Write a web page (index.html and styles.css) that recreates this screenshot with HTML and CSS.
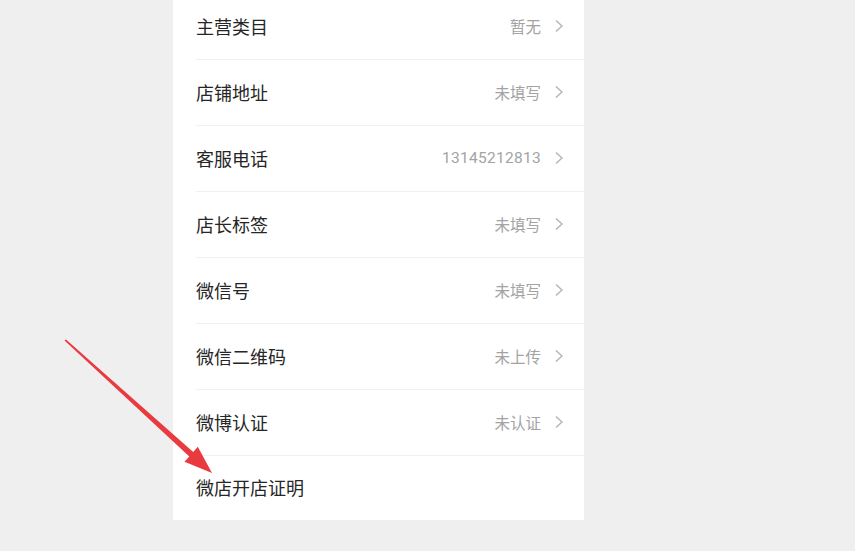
FILE: index.html
```html
<!DOCTYPE html>
<html lang="zh">
<head>
<meta charset="utf-8">
<link rel="stylesheet" href="styles.css">
</head>
<body>
<div class="panel">
  <div class="row"><div class="inner"><span class="label">主营类目</span><span class="value">暂无</span><svg class="chev" viewBox="0 0 10 14"><path d="M2 1.5 L8 7 L2 12.5"/></svg></div></div>
  <div class="row"><div class="inner"><span class="label">店铺地址</span><span class="value">未填写</span><svg class="chev" viewBox="0 0 10 14"><path d="M2 1.5 L8 7 L2 12.5"/></svg></div></div>
  <div class="row"><div class="inner"><span class="label">客服电话</span><span class="value num">13145212813</span><svg class="chev" viewBox="0 0 10 14"><path d="M2 1.5 L8 7 L2 12.5"/></svg></div></div>
  <div class="row"><div class="inner"><span class="label">店长标签</span><span class="value">未填写</span><svg class="chev" viewBox="0 0 10 14"><path d="M2 1.5 L8 7 L2 12.5"/></svg></div></div>
  <div class="row"><div class="inner"><span class="label">微信号</span><span class="value">未填写</span><svg class="chev" viewBox="0 0 10 14"><path d="M2 1.5 L8 7 L2 12.5"/></svg></div></div>
  <div class="row"><div class="inner"><span class="label">微信二维码</span><span class="value">未上传</span><svg class="chev" viewBox="0 0 10 14"><path d="M2 1.5 L8 7 L2 12.5"/></svg></div></div>
  <div class="row"><div class="inner"><span class="label">微博认证</span><span class="value">未认证</span><svg class="chev" viewBox="0 0 10 14"><path d="M2 1.5 L8 7 L2 12.5"/></svg></div></div>
  <div class="row last"><div class="inner"><span class="label">微店开店证明</span></div></div>
</div>
<svg class="arrow" viewBox="0 0 855 551" width="855" height="551">
  <polygon points="64.5,340.5 66,339.5 193.2,452 197.8,446.8 212,473 184.5,461.8 189.3,456.4" />
</svg>
</body>
</html>
```

FILE: styles.css
```css
html, body {
  margin: 0;
  padding: 0;
}
body {
  width: 855px;
  height: 551px;
  overflow: hidden;
  background: #efefef;
  font-family: "Noto Sans CJK SC", "Noto Sans", sans-serif;
  position: relative;
}
.panel {
  margin-left: 173px;
  margin-top: -6px;
  width: 411px;
  background: #ffffff;
}
.row {
  padding-left: 23px;
}
.inner {
  display: flex;
  align-items: center;
  box-sizing: border-box;
  height: 66px;
  padding-bottom: 2px;
  border-bottom: 1px solid #f1f1f1;
  padding-right: 20px;
}
.row.last .inner {
  border-bottom: none;
  height: 64px;
}
.label {
  flex: 1;
  font-size: 18px;
  color: #262626;
}
.value {
  font-size: 15.5px;
  color: #a3a3a3;
  margin-right: 13px;
}
.value.num {
  font-family: "Roboto", "Noto Sans", sans-serif;
  letter-spacing: 0.3px;
}
.chev {
  width: 10px;
  height: 14px;
  fill: none;
  stroke: #b5b5b5;
  stroke-width: 1.4;
}
.arrow {
  position: absolute;
  left: 0;
  top: 0;
  fill: #e83a3f;
}
```
